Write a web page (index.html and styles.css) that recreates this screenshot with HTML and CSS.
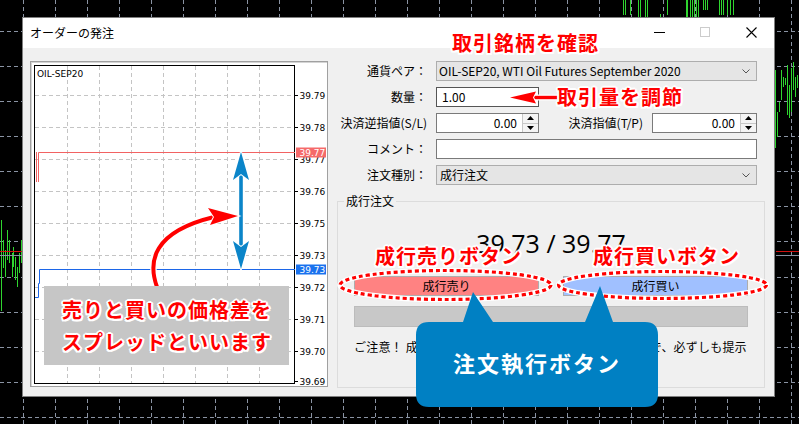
FILE: index.html
```html
<!DOCTYPE html>
<html lang="ja">
<head>
<meta charset="utf-8">
<title>オーダーの発注</title>
<link rel="stylesheet" href="styles.css">
</head>
<body>
<div class="screen">
  <svg class="backdrop" width="799" height="424" viewBox="0 0 799 424">
    <path class="bg-grid" d="M23.5 0V424 M55.5 0V424 M87.5 0V424 M119.5 0V424 M151.5 0V424 M183.5 0V424 M215.5 0V424 M247.5 0V424 M279.5 0V424 M311.5 0V424 M343.5 0V424 M375.5 0V424 M407.5 0V424 M439.5 0V424 M471.5 0V424 M503.5 0V424 M535.5 0V424 M567.5 0V424 M599.5 0V424 M631.5 0V424 M663.5 0V424 M695.5 0V424 M727.5 0V424 M759.5 0V424 M791.5 0V424 M0 31.5H799 M0 66.5H799 M0 101.5H799 M0 136.5H799 M0 171.5H799 M0 206.5H799 M0 241.5H799 M0 277.5H799 M0 312.5H799 M0 347.5H799 M0 382.5H799 M0 417.5H799"/>
    <path class="bg-candles" d="M1.5 220V311 M3.5 240V268 M5.5 250V277 M7.5 230V260 M9.5 240V263 M12.5 253V277 M13.5 247V267 M15.5 257V280 M17.5 267V287 M19.5 253V273 M21.5 240V263 M623.5 0V15 M625.5 0V15 M630.5 0V15 M638.5 0V17 M640.5 0V17 M645.5 0V17 M647.5 0V17 M660.5 14V17 M667.5 0V15 M686.5 0V17 M687.5 0V17 M690.5 0V17 M692.5 0V17 M694.5 0V17 M696.5 0V17 M698.5 0V17 M703.5 0V10 M705.5 0V10 M707.5 0V10 M719.5 0V15 M721.5 0V15 M723.5 0V15 M727.5 0V15 M730.5 0V15 M733.5 0V15 M775.5 70V148 M777.5 112V137 M779.5 102V112 M781.5 70V100 M783.5 77V87 M785.5 78V85 M787.5 65V115 M789.5 85V118 M791.5 68V112 M793.5 62V90 M795.5 77V97 M797.5 75V88"/>
    <path class="bg-ask" d="M0 251.5H22 M776 251.5H799"/>
    <path class="bg-bid" d="M0 255.5H22 M776 255.5H799"/>
  </svg>

  <div class="dialog">
    <div class="titlebar">
      <span class="title">オーダーの発注</span>
      <div class="winbtns">
        <span class="wb"><svg width="11" height="10" viewBox="0 0 11 10"><path d="M0 5.5H11" stroke="#000" stroke-width="1"/></svg></span>
        <span class="wb"><svg width="10" height="10" viewBox="0 0 10 10"><rect x="0.5" y="0.5" width="9" height="9" fill="none" stroke="#cccccc"/></svg></span>
        <span class="wb"><svg width="11" height="11" viewBox="0 0 11 11"><path d="M0.5 0.5L10.5 10.5M10.5 0.5L0.5 10.5" stroke="#000" stroke-width="1.1"/></svg></span>
      </div>
    </div>

    <div class="dbody">
      <div class="chartpanel">
        <svg class="chart" width="296" height="324" viewBox="31 62 296 324">
          <rect x="34.5" y="65.5" width="260" height="318" fill="#fff" stroke="#000"/>
          <path class="cgrid" d="M67.5 66V383 M99.5 66V383 M131.5 66V383 M163.5 66V383 M195.5 66V383 M227.5 66V383 M259.5 66V383 M35 95.5H294 M35 127.5H294 M35 159.5H294 M35 191.5H294 M35 223.5H294 M35 255.5H294 M35 287.5H294 M35 319.5H294 M35 351.5H294"/>
          <path d="M295 95.5h3 M295 127.5h3 M295 159.5h3 M295 191.5h3 M295 223.5h3 M295 255.5h3 M295 287.5h3 M295 319.5h3 M295 351.5h3 M295 381.5h3" stroke="#000"/>
          <g class="clabels">
            <text x="37" y="77">OIL-SEP20</text>
            <text x="299.5" y="98.5">39.79</text>
            <text x="299.5" y="130.5">39.78</text>
            <text x="299.5" y="162.5">39.77</text>
            <text x="299.5" y="194.5">39.76</text>
            <text x="299.5" y="226.5">39.75</text>
            <text x="299.5" y="258.5">39.73</text>
            <text x="299.5" y="290.5">39.72</text>
            <text x="299.5" y="322.5">39.71</text>
            <text x="299.5" y="354.5">39.70</text>
            <text x="299.5" y="384.5">39.69</text>
          </g>
          <path d="M36.5 182V152 M38.5 182V152.5H295" stroke="#f26262" fill="none"/>
          <rect x="296" y="147.5" width="30" height="10" fill="#f56a6a"/>
          <text class="tag" x="299.5" y="156">39.77</text>
          <path d="M35 297.5H38.5V283.5H39.5V269.5H295" stroke="#1c66e8" fill="none"/>
          <rect x="296" y="264.5" width="30" height="10" fill="#1a72ee"/>
          <text class="tag" x="299.5" y="273">39.73</text>
        </svg>
      </div>

      <div class="rightcol">
        <div class="form">
          <span class="lbl">通貨ペア：</span>
          <div class="combo"><span>OIL-SEP20, WTI Oil Futures September 2020</span><svg width="8" height="5" viewBox="0 0 8 5"><path d="M0.5 0.5L4 4L7.5 0.5" fill="none" stroke="#555"/></svg></div>

          <span class="lbl">数量：</span>
          <div class="ctrl"><div class="input qty">1.00</div></div>

          <span class="lbl">決済逆指値(S/L)</span>
          <div class="ctrl split">
            <div class="spin sl"><span class="val">0.00</span><span class="spinbtns"><span><svg width="7" height="4" viewBox="0 0 7 4"><path d="M0 4L3.5 0L7 4Z" fill="#000"/></svg></span><span><svg width="7" height="4" viewBox="0 0 7 4"><path d="M0 0L3.5 4L7 0Z" fill="#000"/></svg></span></span></div>
            <span class="lbl2">決済指値(T/P)</span>
            <div class="spin tp"><span class="val">0.00</span><span class="spinbtns"><span><svg width="7" height="4" viewBox="0 0 7 4"><path d="M0 4L3.5 0L7 4Z" fill="#000"/></svg></span><span><svg width="7" height="4" viewBox="0 0 7 4"><path d="M0 0L3.5 4L7 0Z" fill="#000"/></svg></span></span></div>
          </div>

          <span class="lbl">コメント：</span>
          <div class="input comment"></div>

          <span class="lbl">注文種別：</span>
          <div class="combo type"><span>成行注文</span><svg width="8" height="5" viewBox="0 0 8 5"><path d="M0.5 0.5L4 4L7.5 0.5" fill="none" stroke="#555"/></svg></div>
        </div>

        <fieldset class="group">
          <legend>成行注文</legend>
          <div class="price">39.73 / 39.77</div>
          <div class="btns">
            <div class="btn sell">成行売り</div>
            <div class="btn buy">成行買い</div>
          </div>
          <div class="bar"></div>
          <div class="note">ご注意！ 成行注文は約定時に価格が急に変動しますので、必ずしも提示</div>
        </fieldset>
      </div>
    </div>
  </div>

  <div class="annot">
    <svg class="annot-svg" width="799" height="424" viewBox="0 0 799 424">
      <path d="M241 170V251" stroke="#fff" stroke-width="6" fill="none"/>
      <path d="M241 170V251" stroke="#0b85c9" stroke-width="3.6" fill="none"/>
      <polygon points="241,152 249,180 241,174 233,180" fill="#0b85c9" stroke="#fff" stroke-width="2" paint-order="stroke"/>
      <polygon points="241,269 249,241 241,247 233,241" fill="#0b85c9" stroke="#fff" stroke-width="2" paint-order="stroke"/>
      <path d="M157 287C148 262 152 232 214 217" stroke="#fff" stroke-width="6.5" fill="none" stroke-linecap="round"/>
      <path d="M157 287C148 262 152 232 214 217" stroke="#f00" stroke-width="4" fill="none" stroke-linecap="round"/>
      <polygon points="238,216 208,208 214,217 210,225" fill="#f00" stroke="#fff" stroke-width="2" paint-order="stroke"/>
      <path d="M530 97.5H558" stroke="#fff" stroke-width="6" fill="none"/>
      <path d="M530 97.5H558" stroke="#f00" stroke-width="3.4" fill="none"/>
      <polygon points="510,97.5 536,91.5 533,97.5 536,103.5" fill="#f00" stroke="#fff" stroke-width="2" paint-order="stroke"/>
      <ellipse cx="445.5" cy="285" rx="105.5" ry="14.5" fill="none" stroke="#fff" stroke-width="5.5"/>
      <ellipse cx="445.5" cy="285" rx="105.5" ry="14.5" fill="none" stroke="#f00" stroke-width="3.2" stroke-dasharray="4 3"/>
      <ellipse cx="662.5" cy="285" rx="104" ry="13.5" fill="none" stroke="#fff" stroke-width="5.5"/>
      <ellipse cx="662.5" cy="285" rx="104" ry="13.5" fill="none" stroke="#f00" stroke-width="3.2" stroke-dasharray="4 3"/>
      <path d="M429 322H463L473 292L493 322H585L600 286L613 322H645Q658 322 658 335V394Q658 407 645 407H429Q416 407 416 394V335Q416 322 429 322Z" fill="#0080c3"/>
    </svg>

    <span class="red-note a-pair">取引銘柄を確認</span>
    <span class="red-note a-qty">取引量を調節</span>
    <span class="red-note a-sell">成行売りボタン</span>
    <span class="red-note a-buy">成行買いボタン</span>
    <div class="spread-box">
      <span class="red-note">売りと買いの価格差を</span>
      <span class="red-note">スプレッドといいます</span>
    </div>
    <span class="callout-text">注文執行ボタン</span>
  </div>
</div>
</body>
</html>
```
FILE: styles.css
```css
* { box-sizing: border-box; }

html, body {
  margin: 0;
  padding: 0;
}

body {
  width: 799px;
  height: 424px;
  overflow: hidden;
  background: #000;
  font-family: "Noto Sans CJK JP", "Noto Sans", sans-serif;
  font-size: 12px;
  color: #000;
}

.screen {
  position: relative;
  width: 799px;
  height: 424px;
  padding: 17px 0 0 22px;
}

.backdrop {
  position: absolute;
  left: 0;
  top: 0;
}

.bg-grid {
  fill: none;
  stroke: #8a93a3;
  stroke-width: 1;
  stroke-dasharray: 4 3;
}

.bg-candles {
  fill: none;
  stroke: #2fd52f;
  stroke-width: 1;
}

.bg-ask { stroke: #d01010; fill: none; }
.bg-bid { stroke: #8a93a3; fill: none; }

.dialog {
  position: relative;
  width: 753px;
  height: 380px;
  border: 1px solid #7f7f7f;
  background: #f0f0f0;
  display: flex;
  flex-direction: column;
}

.titlebar {
  height: 30px;
  background: #fff;
  display: flex;
  align-items: center;
  flex: none;
}

.title {
  flex: 1;
  padding-left: 7px;
  font-size: 12px;
  line-height: 30px;
}

.winbtns {
  display: flex;
  height: 30px;
}

.wb {
  width: 46px;
  height: 30px;
  display: flex;
  align-items: center;
  justify-content: center;
  padding-bottom: 2px;
}

.dbody {
  flex: 1;
  display: flex;
  gap: 9px;
  padding: 13px 9px 0 7px;
}

.chartpanel {
  width: 298px;
  height: 326px;
  flex: none;
  background: #fff;
  border: 1px solid #a0a0a0;
  box-shadow: inset 1px 1px #d4d4d4;
}

.chart { display: block; }

.cgrid {
  fill: none;
  stroke: #c4c4c4;
  stroke-dasharray: 4 3;
}

.clabels text,
.chart .tag {
  font-family: "DejaVu Sans", sans-serif;
  font-size: 9px;
}

.chart .tag { fill: #fff; }

.rightcol {
  width: 428px;
  flex: none;
  display: flex;
  flex-direction: column;
}

.form {
  display: grid;
  grid-template-columns: 90px 321px;
  column-gap: 9px;
  row-gap: 6px;
  align-items: center;
}

.lbl {
  text-align: right;
  white-space: nowrap;
  line-height: 20px;
}

.combo {
  height: 20px;
  background: #e5e5e5;
  border: 1px solid #adadad;
  display: flex;
  align-items: center;
  justify-content: space-between;
  padding: 0 6px 0 2px;
  line-height: 18px;
  white-space: nowrap;
}

.combo.type { padding-left: 3px; }

.ctrl { height: 20px; display: flex; }

.input {
  height: 20px;
  background: #fff;
  border: 1px solid #7a7a7a;
  line-height: 18px;
}

.input.qty {
  width: 103px;
  padding-left: 5px;
  border-color: #555;
}

.split { align-items: center; }

.spin {
  height: 20px;
  display: flex;
  background: #fff;
  border: 1px solid #7a7a7a;
}

.spin.sl { width: 103px; }
.spin.tp { width: 105px; }

.spin .val {
  flex: 1;
  text-align: right;
  padding-right: 5px;
  line-height: 18px;
}

.spinbtns {
  width: 16px;
  display: flex;
  flex-direction: column;
  border-left: 1px solid #c8c8c8;
}

.spinbtns span {
  flex: 1;
  display: flex;
  align-items: center;
  justify-content: center;
  background: #f4f4f4;
}

.spinbtns span + span { border-top: 1px solid #c8c8c8; }

.lbl2 {
  flex: 1;
  text-align: right;
  padding-right: 9px;
  white-space: nowrap;
  line-height: 20px;
}

.group {
  margin: 8px 0 0 0;
  padding: 0 16px;
  border: 1px solid #dcdcdc;
  height: 195px;
  min-width: 0;
}

.group legend {
  padding: 0 2px;
  margin-left: -10px;
  line-height: 16px;
}

.price {
  margin-top: 17px;
  text-align: center;
  font-family: "Open Sans", sans-serif;
  font-size: 25px;
  line-height: 34px;
}

.btns {
  margin-top: 16px;
  display: flex;
  gap: 24px;
}

.btn {
  flex: 1;
  height: 20px;
  border: 1px solid #adadad;
  text-align: center;
  line-height: 18px;
}

.btn.sell { background: #ff8282; }
.btn.buy { background: #a0c0ff; }

.bar {
  margin-top: 10px;
  height: 21px;
  background: #c8c8c8;
  border: 1px solid #bcbcbc;
}

.note {
  margin-top: 12px;
  line-height: 16px;
  letter-spacing: 0.2px;
  white-space: nowrap;
}

.annot {
  position: absolute;
  left: 0;
  top: 0;
  width: 799px;
  height: 424px;
  pointer-events: none;
}

.annot-svg {
  position: absolute;
  left: 0;
  top: 0;
}

.red-note {
  color: #f00;
  font-weight: 700;
  font-size: 20px;
  letter-spacing: 1px;
  line-height: 24px;
  white-space: nowrap;
  text-shadow:
    2px 0 #fff, -2px 0 #fff, 0 2px #fff, 0 -2px #fff,
    1.5px 1.5px #fff, -1.5px 1.5px #fff, 1.5px -1.5px #fff, -1.5px -1.5px #fff;
}

.a-pair { position: absolute; left: 452px; top: 31px; }
.a-qty  { position: absolute; left: 557px; top: 85px; }
.a-sell { position: absolute; left: 375px; top: 244px; }
.a-buy  { position: absolute; left: 593px; top: 244px; }

.spread-box {
  position: absolute;
  left: 44px;
  top: 286px;
  width: 245px;
  height: 79px;
  background: #c6c6c6;
  display: flex;
  flex-direction: column;
  align-items: center;
  justify-content: center;
  gap: 8px;
  padding-left: 1px;
}

.callout-text {
  position: absolute;
  left: 416px;
  top: 347px;
  width: 242px;
  text-align: center;
  color: #fff;
  font-weight: 700;
  font-size: 22px;
  letter-spacing: 2px;
  line-height: 30px;
  white-space: nowrap;
}
```
